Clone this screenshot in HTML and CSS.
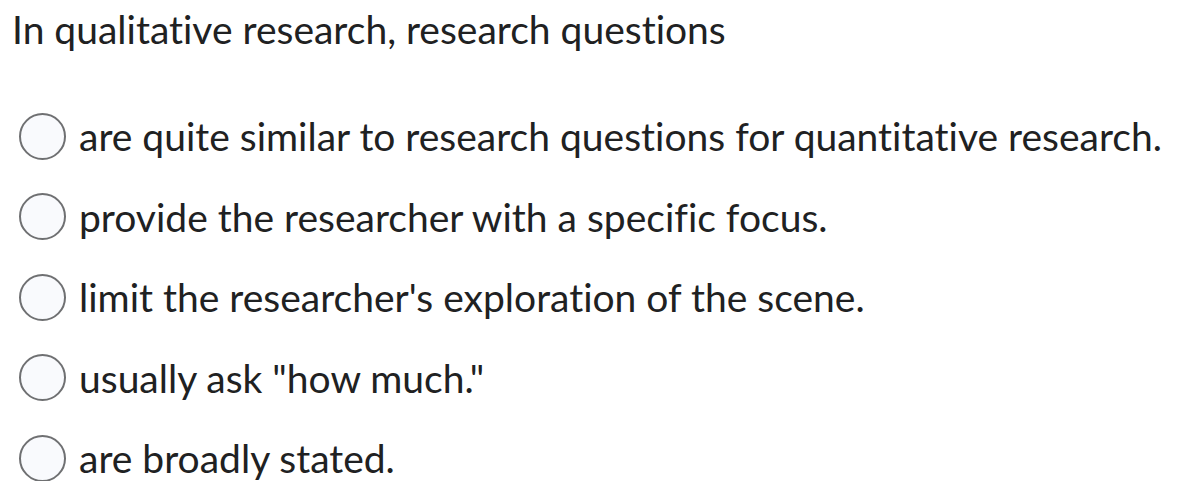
FILE: index.html
```html
<!DOCTYPE html>
<html>
<head>
<meta charset="utf-8">
<link rel="stylesheet" href="styles.css">
</head>
<body>
<div class="question">
  <div class="prompt">In qualitative research, research questions</div>
  <div class="options">
    <label class="option"><span class="radio"></span><span class="text">are quite similar to research questions for quantitative research.</span></label>
    <label class="option"><span class="radio"></span><span class="text">provide the researcher with a specific focus.</span></label>
    <label class="option"><span class="radio"></span><span class="text">limit the researcher's exploration of the scene.</span></label>
    <label class="option"><span class="radio"></span><span class="text">usually ask "how much."</span></label>
    <label class="option"><span class="radio"></span><span class="text">are broadly stated.</span></label>
  </div>
</div>
</body>
</html>
```

FILE: styles.css
```css
html, body {
  margin: 0;
  padding: 0;
  background: #ffffff;
}
body {
  font-family: Lato, "Noto Sans", sans-serif;
  color: #202122;
  font-variant-ligatures: none;
  font-feature-settings: "liga" 0, "clig" 0;
}
.question {
  padding: 5px 0 0 12px;
}
.prompt {
  font-size: 39px;
  line-height: 48px;
}
.options {
  display: flex;
  flex-direction: column;
  gap: 34.5px;
  margin-top: 60px;
  padding-left: 7px;
}
.option {
  display: flex;
  align-items: center;
  gap: 13px;
  height: 46px;
}
.radio {
  width: 43px;
  height: 43px;
  border: 2px solid #6f7072;
  border-radius: 50%;
  background: #f9fafd;
  flex: none;
}
.text {
  font-size: 39px;
  line-height: 46px;
}
```
